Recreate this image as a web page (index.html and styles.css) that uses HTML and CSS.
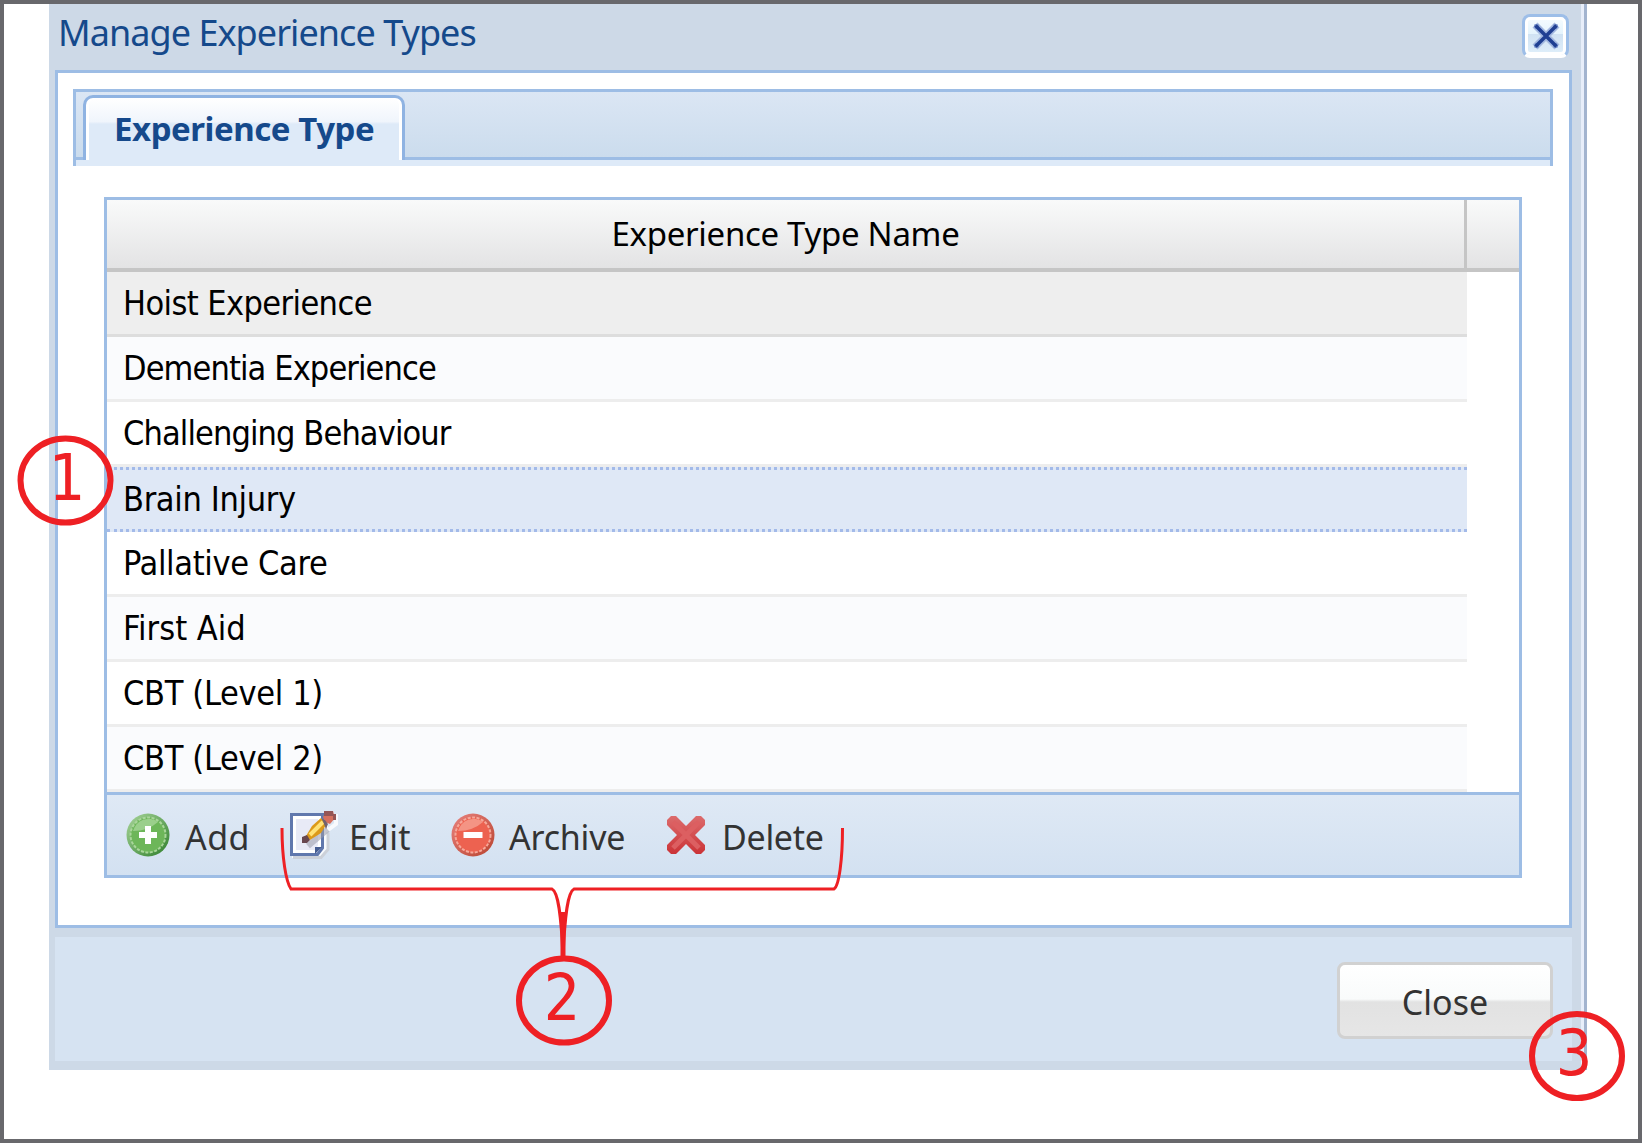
FILE: index.html
```
<!DOCTYPE html>
<html lang="en">
<head>
  <meta charset="utf-8">
  <title>Manage Experience Types</title>
  <link rel="stylesheet" href="styles.css">
</head>
<body>
  <div class="window">
    <div class="window-header">
      <span class="window-title">Manage Experience Types</span>
      <button class="tool-close" aria-label="Close window">
        <svg width="28" height="28" viewBox="0 0 28 28"><path d="M3 3L25 25M25 3L3 25" stroke="#a3b8e0" stroke-width="7"/><path d="M2 4H7M4.500 2V7M21 4H26M23.500 2V7M2 24H7M4.500 21V26M21 24H26M23.500 21V26" stroke="#7f98cf" stroke-width="3"/><path d="M3.500 3.500L24.500 24.500M24.500 3.500L3.500 24.500" stroke="#1f3f92" stroke-width="3.6"/></svg>
      </button>
    </div>

    <div class="window-body">
      <div class="tab-bar">
        <div class="tab-strip">
          <div class="tab"><span class="tab-text">Experience Type</span></div>
        </div>
      </div>

      <div class="grid">
        <div class="grid-header">
          <div class="column-name"><span class="column-text">Experience Type Name</span></div>
          <div class="column-end"></div>
        </div>
        <div class="grid-rows">
          <div class="row over"><span class="tight">Hoist Experience</span></div>
          <div class="row alt"><span class="tighter">Dementia Experience</span></div>
          <div class="row"><span class="tighter">Challenging Behaviour</span></div>
          <div class="row selected"><span>Brain Injury</span></div>
          <div class="row"><span>Pallative Care</span></div>
          <div class="row alt"><span class="loose">First Aid</span></div>
          <div class="row"><span>CBT (Level 1)</span></div>
          <div class="row alt"><span>CBT (Level 2)</span></div>
        </div>
        <div class="toolbar">
          <button class="tool add">
            <svg width="44" height="44" viewBox="0 0 44 44">
              <defs><linearGradient id="green" x1="0" y1="0" x2="1" y2="1"><stop offset="0" stop-color="#a9d69b"/><stop offset="1" stop-color="#2f7f2c"/></linearGradient></defs>
              <circle cx="22" cy="22" r="21.500" fill="url(#green)"/>
              <circle cx="22" cy="22" r="17.500" fill="#6db659" stroke="#a9d69a" stroke-width="2" stroke-dasharray="3 1.500"/>
              <path d="M7 18A16 16 0 0 1 32 9Q22 18 7 18Z" fill="#b9dfae" opacity=".6"/>
              <path d="M19 13h6v6h6v6h-6v6h-6v-6h-6v-6h6z" fill="#fff"/>
            </svg>
            <span>Add</span>
          </button>
          <button class="tool edit">
            <svg width="48" height="50" viewBox="0 0 48 50">
              <path d="M3 6h35v32l-7 10H2z" fill="#fff" opacity=".8"/>
              <path d="M3 47.500h28l7-8v-17" fill="none" stroke="#ccd1d9" stroke-width="3"/>
              <path d="M1.500 4.500h31V38l-5 6.500h-26z" fill="#e8eaf6" stroke="#6078ad" stroke-width="3"/>
              <path d="M4.500 7.500h25V36l-4 5.500h-21z" fill="none" stroke="#fff" stroke-width="3"/>
              <path d="M18 36L38 19" stroke="#9a9cab" stroke-width="6" opacity=".55"/>
              <path d="M38 20l8-6v-10" fill="none" stroke="#fff" stroke-width="4" opacity=".8"/>
              <path d="M25 44v-7h7z" fill="#465d91"/>
              <path d="M16 26L22 16L31 8L36 15L31 23L20 30Z" fill="#dc9a1a"/>
              <path d="M20 25L33 12" stroke="#ffe277" stroke-width="4"/>
              <path d="M12 27L17 25L20 30L17 33H12Z" fill="#68464e"/>
              <path d="M33 7L36 1H43L45 8L40 14L35 12Z" fill="#d6705e"/>
              <path d="M34 1h9v3h3v6h-3v-4h-9z" fill="#945656"/>
              <path d="M32 9l3 1l3 4l-2 5z" fill="#72636f"/>
            </svg>
            <span>Edit</span>
          </button>
          <button class="tool archive">
            <svg width="44" height="44" viewBox="0 0 44 44">
              <defs><linearGradient id="red" x1="0" y1="0" x2="1" y2="1"><stop offset="0" stop-color="#e8827e"/><stop offset="1" stop-color="#b9442f"/></linearGradient></defs>
              <circle cx="22" cy="22" r="21.500" fill="url(#red)"/>
              <circle cx="22" cy="22" r="17.500" fill="#ed6250" stroke="#f6a89a" stroke-width="2" stroke-dasharray="3 1.500"/>
              <path d="M7 18A16 16 0 0 1 32 9Q22 18 7 18Z" fill="#f9b5a6" opacity=".6"/>
              <path d="M12.500 19h19v6h-19z" fill="#fff"/>
            </svg>
            <span>Archive</span>
          </button>
          <button class="tool delete">
            <svg width="38" height="38" viewBox="0 0 38 38">
              <defs><linearGradient id="cross" x1="0" y1="0" x2="0" y2="1"><stop offset="0" stop-color="#dc6b6c"/><stop offset="1" stop-color="#cb3337"/></linearGradient></defs>
              <path d="M4 0H9L19 10L29 0H34L38 4V9L28 19L38 29V34L34 38H29L19 28L9 38H4L0 34V29L10 19L0 9V4Z" fill="url(#cross)"/>
              <path d="M6 6L32 32M32 6L6 32" stroke="#dc5f61" stroke-width="5"/>
            </svg>
            <span>Delete</span>
          </button>
        </div>
      </div>
    </div>

    <div class="window-footer">
      <button class="close-button"><span>Close</span></button>
    </div>
  </div>

  <!-- numbered callouts lying over the window -->
  <svg class="callouts" width="1642" height="1143" viewBox="0 0 1642 1143">
    <path d="M282 828C282 858 286 882 291 889H552C558 892 561 912 563 957M842.500 828C842.500 860 839 886 834 889H574C568 892 565 912 563 957" class="brace"/>
    <path d="M563 912V957" class="stem"/>
    <ellipse cx="65.500" cy="480.500" rx="45" ry="42"/>
    <ellipse cx="564" cy="1000.500" rx="45" ry="42"/>
    <ellipse cx="1577" cy="1056" rx="45" ry="42"/>
    <text x="67" y="500">1</text>
    <text x="562" y="1020">2</text>
    <text x="1574" y="1075">3</text>
  </svg>
</body>
</html>
```
FILE: styles.css
```
* {
  box-sizing: border-box;
}

body {
  margin: 0;
  height: 1143px;
  border: 4px solid #68686c;
  background: #fff;
  overflow: hidden;
  font-family: "Noto Sans", "Open Sans", sans-serif;
}

button {
  margin: 0;
  padding: 0;
  border: none;
  background: none;
  font-family: inherit;
}

span {
  white-space: nowrap;
}

.window {
  width: 1538px;
  height: 1066px;
  margin-left: 45px;
  padding: 0 12px 9px 6px;
  background: #cdd9e7;
  border-right: 3px solid #a3b4cf;
  box-shadow: inset -3px 0 #e8eefa;
}

.window-header {
  height: 66px;
  display: flex;
  justify-content: space-between;
  padding: 10px 3px 0 3px;
}

.window-title {
  font-size: 36px;
  line-height: 37px;
  letter-spacing: -0.95px;
  color: #15498b;
}

.tool-close {
  width: 47px;
  height: 44px;
  display: flex;
  align-items: center;
  justify-content: center;
  border: 3px solid #9dbee8;
  border-bottom-color: #fff;
  border-radius: 8px;
  background: linear-gradient(#f6fcff, #e4f4fd 45%, #d0e2f3 46%, #e0effa);
  box-shadow: inset 0 0 0 3px #fff;
}

.window-body {
  height: 858px;
  padding: 16px 16px 0 15px;
  border: 3px solid #9dbde5;
  background: #fff;
}

.tab-bar {
  height: 77px;
  border: 3px solid #9dbde5;
  border-bottom: none;
  background: #deeaf8;
}

.tab-strip {
  height: 68px;
  padding: 3px 0 0 7px;
  border-bottom: 3px solid #9dbde5;
  background: linear-gradient(#dbe6f4, #cbdced);
}

.tab {
  width: 322px;
  height: 65px;
  padding: 12px 0 0 28px;
  border: 3px solid #8fb3e2;
  border-bottom: none;
  border-radius: 10px 10px 0 0;
  background: linear-gradient(#fff, #f0f5fc 38%, #deeaf8 42%);
  box-shadow: inset 3px 0 #fff, inset -3px 0 #fff;
}

.tab-text {
  display: block;
  font-size: 33px;
  line-height: 37px;
  letter-spacing: -0.45px;
  font-weight: bold;
  color: #15498b;
}

.grid {
  width: 1418px;
  height: 681px;
  margin: 31px 0 0 31px;
  border: 3px solid #9dbde5;
}

.grid-header {
  height: 72px;
  display: flex;
  border-bottom: 4px solid #c5c5c5;
  background: linear-gradient(#f9fafa, #e3e3e4);
}

.column-name {
  width: 1360px;
  display: flex;
  justify-content: center;
  border-right: 3px solid #c5c5c5;
}

.column-text {
  font-size: 33px;
  line-height: 68px;
  letter-spacing: -0.3px;
}

.grid-rows {
  width: 1360px;
  height: 520px;
  overflow: hidden;
  font-family: "DejaVu Sans Condensed", "DejaVu Sans", sans-serif;
  font-stretch: condensed;
  font-size: 34px;
  letter-spacing: -0.35px;
}

.row {
  height: 65px;
  padding-left: 16px;
  border-bottom: 3px solid #ededed;
  line-height: 63px;
}

.over {
  background: #eee;
  border-color: #ddd;
}

.alt {
  background: #fafbfd;
}

.selected {
  background: #dfe8f6;
  border-top: 3px dotted #a3bae9;
  border-bottom: 3px dotted #a3bae9;
  line-height: 58px;
}

.tight {
  letter-spacing: -0.6px;
}

.tighter {
  letter-spacing: -0.9px;
}

.loose {
  letter-spacing: 0;
}

.toolbar {
  height: 83px;
  display: flex;
  align-items: center;
  padding-left: 19px;
  border-top: 3px solid #9dbde5;
  background: linear-gradient(#dfe9f5, #d3e1f1);
}

.tool {
  display: flex;
  align-items: center;
  font-size: 34px;
  color: #333;
}

.tool svg {
  flex: none;
}

.tool span {
  padding-top: 3px;
}

.add {
  width: 164px;
  gap: 15px;
  letter-spacing: 0.4px;
}

.edit {
  width: 161px;
  gap: 11px;
  letter-spacing: 0.2px;
}

.archive {
  width: 216px;
  gap: 14px;
  letter-spacing: -0.2px;
}

.delete {
  gap: 17px;
  letter-spacing: -0.3px;
}

.window-footer {
  height: 124px;
  margin-top: 9px;
  padding: 25px 19px 0 0;
  display: flex;
  justify-content: flex-end;
  background: #d6e3f2;
}

.close-button {
  width: 216px;
  height: 77px;
  padding-top: 3px;
  border: 3px solid #d1d1d1;
  border-radius: 8px;
  background: linear-gradient(#fff, #f9fbfb 48%, #e2e2e2 52%, #e6e6e6);
  font-size: 34px;
  color: #333;
}

.callouts {
  position: absolute;
  left: 0;
  top: 0;
  fill: none;
  stroke: #ee2024;
  stroke-width: 6;
}

.brace {
  stroke-width: 3;
}

.stem {
  stroke-width: 5;
}

.callouts text {
  font-family: "DejaVu Sans Condensed", "DejaVu Sans", sans-serif;
  font-stretch: condensed;
  font-size: 64px;
  text-anchor: middle;
  fill: #ee2024;
  stroke: none;
}
```
